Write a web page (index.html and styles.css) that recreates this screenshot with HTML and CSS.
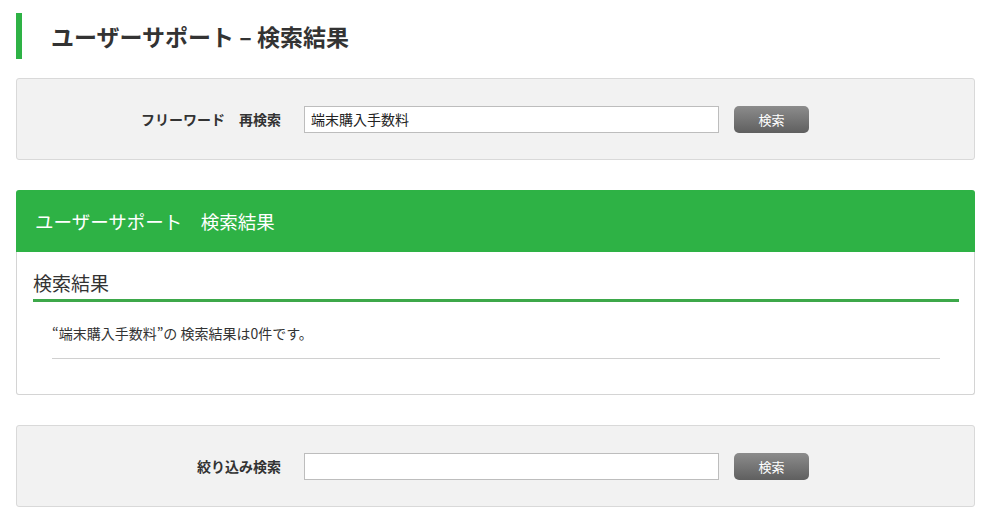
FILE: index.html
```html
<!DOCTYPE html>
<html lang="ja">
<head>
<meta charset="utf-8">
<title>ユーザーサポート – 検索結果</title>
<link rel="stylesheet" href="styles.css">
</head>
<body>
<div class="page">
  <h1 class="page-title">ユーザーサポート – 検索結果</h1>

  <form class="search-box">
    <label class="search-label">フリーワード　再検索</label>
    <input class="search-input" type="text" value="端末購入手数料">
    <button class="search-btn" type="button">検索</button>
  </form>

  <section class="panel">
    <div class="panel-head">ユーザーサポート　検索結果</div>
    <div class="panel-body">
      <h2 class="result-title">検索結果</h2>
      <p class="result-text">“端末購入手数料”の 検索結果は0件です。</p>
    </div>
  </section>

  <form class="search-box">
    <label class="search-label">絞り込み検索</label>
    <input class="search-input" type="text" value="">
    <button class="search-btn" type="button">検索</button>
  </form>
</div>
</body>
</html>
```

FILE: styles.css
```css
* { box-sizing: border-box; }
html, body { margin: 0; padding: 0; background: #fff; }
body {
  font-family: "Noto Sans CJK JP", "Noto Sans", sans-serif;
  color: #333;
}
.page {
  width: 959px;
  margin-left: 16px;
  padding-top: 13px;
}
.page-title {
  margin: 0;
  height: 46px;
  border-left: 6px solid #2eb245;
  padding-left: 29px;
  font-size: 23px;
  font-weight: bold;
  line-height: 46px;
  color: #333;
}
.search-box {
  margin: 19px 0 0;
  height: 82px;
  background: #f2f2f2;
  border: 1px solid #d9d9d9;
  border-radius: 3px;
  display: flex;
  align-items: center;
}
.panel + .search-box { margin-top: 30px; }
.search-label {
  width: 264px;
  text-align: right;
  font-size: 14px;
  font-weight: bold;
  color: #333;
  margin-right: 23px;
}
.search-input {
  width: 415px;
  height: 27px;
  border: 1px solid #bdbdbd;
  background: #fff;
  padding: 0 6px;
  font-family: inherit;
  font-size: 14px;
  color: #222;
  outline: none;
  margin: 0 15px 0 0;
}
.search-btn {
  width: 75px;
  height: 27px;
  border: 0;
  border-radius: 5px;
  background: linear-gradient(#8c8c8c, #5f5f5f);
  color: #fff;
  font-family: inherit;
  font-size: 13px;
  padding: 0;
  cursor: pointer;
}
.panel {
  margin-top: 30px;
}
.panel-head {
  height: 62px;
  background: #2eb245;
  border-radius: 3px 3px 0 0;
  color: #fff;
  font-size: 18.5px;
  line-height: 62px;
  padding-left: 19px;
}
.panel-body {
  height: 143px;
  border: 1px solid #d4d4d4;
  border-top: 0;
  border-radius: 0 0 3px 3px;
  padding: 17px 15px 0 16px;
}
.result-title {
  margin: 0;
  font-size: 19px;
  font-weight: normal;
  line-height: 28px;
  padding-bottom: 2px;
  border-bottom: 3px solid #3da84a;
  color: #333;
}
.result-text {
  margin: 19px 19px 0 19px;
  padding: 0 0 12px;
  font-size: 14px;
  line-height: 25px;
  border-bottom: 1px solid #d0d0d0;
  color: #333;
}
```
